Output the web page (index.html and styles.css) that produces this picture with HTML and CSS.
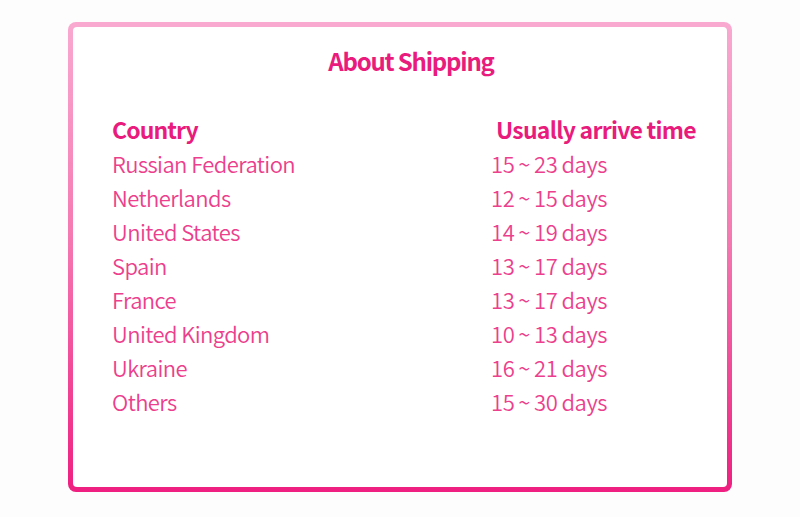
FILE: index.html
```html
<!DOCTYPE html>
<html lang="en">
<head>
<meta charset="utf-8">
<title>About Shipping</title>
<link rel="stylesheet" href="styles.css">
</head>
<body>
<div class="frame">
  <div class="card">
    <h1 class="title">About Shipping</h1>
    <div class="table">
      <div class="th">Country</div>
      <div class="th th-time">Usually arrive time</div>
      <div class="td">Russian Federation</div><div class="td td-time">15 ~ 23 days</div>
      <div class="td">Netherlands</div><div class="td td-time">12 ~ 15 days</div>
      <div class="td">United States</div><div class="td td-time">14 ~ 19 days</div>
      <div class="td">Spain</div><div class="td td-time">13 ~ 17 days</div>
      <div class="td">France</div><div class="td td-time">13 ~ 17 days</div>
      <div class="td">United Kingdom</div><div class="td td-time">10 ~ 13 days</div>
      <div class="td">Ukraine</div><div class="td td-time">16 ~ 21 days</div>
      <div class="td">Others</div><div class="td td-time">15 ~ 30 days</div>
    </div>
  </div>
</div>
</body>
</html>
```
FILE: styles.css
```css
html, body {
  margin: 0;
  padding: 0;
  background: #fefdfe;
}
body {
  font-family: "Noto Sans CJK SC", "Noto Sans", sans-serif;
  padding-top: 22px;
  height: 517px;
  box-sizing: border-box;
}
.frame {
  margin-left: 68px;
  width: 664px;
  height: 470px;
  box-sizing: border-box;
  padding: 5px;
  border-radius: 8px;
  background: linear-gradient(180deg, #f9a9d0 0%, #f57ab2 45%, #ee1f80 100%);
}
.card {
  height: 100%;
  background: #ffffff;
  border-radius: 4px;
  padding-top: 17px;
  box-sizing: border-box;
}
.title {
  margin: 0;
  text-align: center;
  font-size: 24px;
  line-height: 34px;
  font-weight: 700;
  color: #e91b7c;
  letter-spacing: -1.2px;
  padding-left: 22px;
}
.table {
  margin-top: 34px;
  padding-left: 39px;
  display: grid;
  grid-template-columns: 384px 1fr;
}
.th {
  font-size: 23px;
  line-height: 34px;
  font-weight: 700;
  color: #e91b7c;
  letter-spacing: -0.9px;
}
.th-time {
  letter-spacing: -0.75px;
}
.td {
  font-size: 22px;
  line-height: 34px;
  font-weight: 350;
  color: #ec3f8d;
  letter-spacing: -0.58px;
}
.td-time {
  margin-left: -5px;
  word-spacing: -0.5px;
  letter-spacing: -0.4px;
}
```
